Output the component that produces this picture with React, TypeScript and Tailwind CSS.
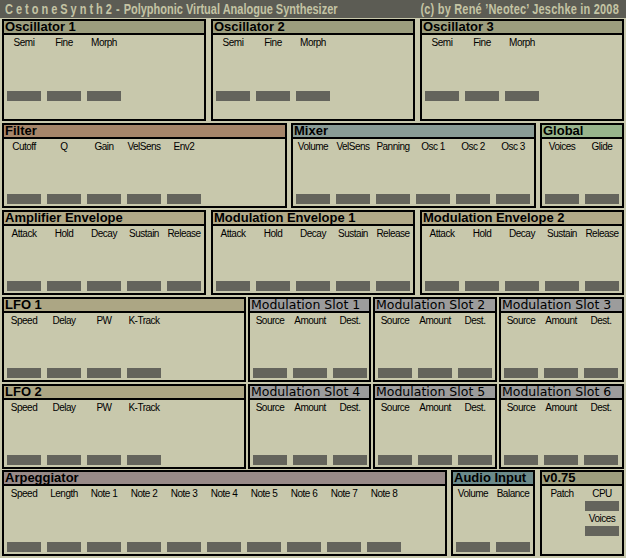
import React from "react";

const LF = "font-['Liberation_Sans',Arial,sans-serif]";

function Controls({ labels, bar = "mt-[41px]" }: { labels: string[]; bar?: string }) {
  return (
    <div className="flex gap-[6px] pl-[3px] pt-[2px]">
      {labels.map((l, i) => (
        <div key={i} className="flex w-[34px] flex-col items-center">
          <div className={`${LF} h-[12px] whitespace-nowrap text-[10px] leading-[12px] tracking-[-0.5px] text-black`}>{l}</div>
          <div className={`${bar} h-[10px] w-[34px] bg-[#64645c]`} />
        </div>
      ))}
    </div>
  );
}

function Panel({
  title,
  hdr,
  w,
  slot = false,
  children,
}: {
  title: string;
  hdr: string;
  w: string;
  slot?: boolean;
  children?: React.ReactNode;
}) {
  return (
    <div className={`${w} flex h-full shrink-0 flex-col overflow-hidden border-2 border-black bg-[#c8c8ac]`}>
      <div
        className={`${hdr} h-[14px] shrink-0 whitespace-nowrap border-b-2 border-black pl-[1px] leading-[12px] text-black ${
          slot ? "font-['DejaVu_Sans',sans-serif] text-[12.5px]" : `${LF} text-[13px] font-bold`
        }`}
      >
        {title}
      </div>
      {children}
    </div>
  );
}

export default function App() {
  const osc = ["Semi", "Fine", "Morph"];
  const env = ["Attack", "Hold", "Decay", "Sustain", "Release"];
  const lfo = ["Speed", "Delay", "PW", "K-Track"];
  const slot = ["Source", "Amount", "Dest."];
  return (
    <div className="flex h-[558px] w-[626px] flex-col overflow-hidden bg-[#c8c8ac]">
      {/* Title bar */}
      <div
        className={`${LF} flex h-[18px] shrink-0 items-center whitespace-nowrap bg-[#5c5c54] text-[11px] font-bold text-[#c4c4a4]`}
      >
        <span className="ml-[5px] inline-block scale-y-[1.4] tracking-[3px]">CetoneSynth2</span>
        <span className="ml-[1px] inline-block scale-y-[1.4]">-</span>
        <span className="ml-[4px] inline-block scale-y-[1.4]">Polyphonic Virtual Analogue Synthesizer</span>
        <span className="ml-auto mr-[7px] inline-block scale-y-[1.4] tracking-[0.2px]">
          (c) by René ’Neotec’ Jeschke in 2008
        </span>
      </div>

      {/* Row 1: oscillators */}
      <div className="mt-[1px] flex h-[102px] shrink-0 pl-[2px]">
        <Panel title="Oscillator 1" hdr="bg-[#9c9e7e]" w="w-[204px]">
          <Controls labels={osc} bar="mt-[42px]" />
        </Panel>
        <div className="w-[5px] shrink-0" />
        <Panel title="Oscillator 2" hdr="bg-[#9c9e7e]" w="w-[204px]">
          <Controls labels={osc} bar="mt-[42px]" />
        </Panel>
        <div className="w-[5px] shrink-0" />
        <Panel title="Oscillator 3" hdr="bg-[#9c9e7e]" w="w-[204px]">
          <Controls labels={osc} bar="mt-[42px]" />
        </Panel>
      </div>

      {/* Row 2 */}
      <div className="mt-[2px] flex h-[85px] shrink-0 gap-[4px] pl-[2px]">
        <Panel title="Filter" hdr="bg-[#a6866a]" w="w-[285px]">
          <Controls labels={["Cutoff", "Q", "Gain", "VelSens", "Env2"]} />
        </Panel>
        <Panel title="Mixer" hdr="bg-[#8a9c96]" w="w-[245px]">
          <Controls labels={["Volume", "VelSens", "Panning", "Osc 1", "Osc 2", "Osc 3"]} />
        </Panel>
        <Panel title="Global" hdr="bg-[#98b48c]" w="w-[84px]">
          <Controls labels={["Voices", "Glide"]} />
        </Panel>
      </div>

      {/* Row 3: envelopes */}
      <div className="mt-[2px] flex h-[85px] shrink-0 gap-[5px] pl-[2px]">
        <Panel title="Amplifier Envelope" hdr="bg-[#b2aa88]" w="w-[204px]">
          <Controls labels={env} />
        </Panel>
        <Panel title="Modulation Envelope 1" hdr="bg-[#b2aa88]" w="w-[204px]">
          <Controls labels={env} />
        </Panel>
        <Panel title="Modulation Envelope 2" hdr="bg-[#b2aa88]" w="w-[204px]">
          <Controls labels={env} />
        </Panel>
      </div>

      {/* Row 4 */}
      <div className="mt-[2px] flex h-[85px] shrink-0 gap-[2px] pl-[2px]">
        <Panel title="LFO 1" hdr="bg-[#aca684]" w="w-[244px]">
          <Controls labels={lfo} />
        </Panel>
        <Panel title="Modulation Slot 1" hdr="bg-[#9c9c9c]" w="w-[123px]" slot>
          <Controls labels={slot} />
        </Panel>
        <Panel title="Modulation Slot 2" hdr="bg-[#9c9c9c]" w="w-[124px]" slot>
          <Controls labels={slot} />
        </Panel>
        <Panel title="Modulation Slot 3" hdr="bg-[#9c9c9c]" w="w-[125px]" slot>
          <Controls labels={slot} />
        </Panel>
      </div>

      {/* Row 5 */}
      <div className="mt-[2px] flex h-[85px] shrink-0 gap-[2px] pl-[2px]">
        <Panel title="LFO 2" hdr="bg-[#aca684]" w="w-[244px]">
          <Controls labels={lfo} />
        </Panel>
        <Panel title="Modulation Slot 4" hdr="bg-[#9c9c9c]" w="w-[123px]" slot>
          <Controls labels={slot} />
        </Panel>
        <Panel title="Modulation Slot 5" hdr="bg-[#9c9c9c]" w="w-[124px]" slot>
          <Controls labels={slot} />
        </Panel>
        <Panel title="Modulation Slot 6" hdr="bg-[#9c9c9c]" w="w-[125px]" slot>
          <Controls labels={slot} />
        </Panel>
      </div>

      {/* Row 6 */}
      <div className="mt-[1px] flex h-[86px] shrink-0 pl-[2px]">
        <Panel title="Arpeggiator" hdr="bg-[#988a88]" w="w-[445px]">
          <Controls
            labels={["Speed", "Length", "Note 1", "Note 2", "Note 3", "Note 4", "Note 5", "Note 6", "Note 7", "Note 8"]}
            bar="mt-[42px]"
          />
        </Panel>
        <div className="w-[4px] shrink-0" />
        <Panel title="Audio Input" hdr="bg-[#6c8a8a]" w="w-[84px]">
          <Controls labels={["Volume", "Balance"]} bar="mt-[42px]" />
        </Panel>
        <div className="w-[5px] shrink-0" />
        <Panel title="v0.75" hdr="bg-[#9e9e7e]" w="w-[84px]">
          <div className="flex gap-[6px] pl-[3px] pt-[2px]">
            <div className="flex w-[34px] flex-col items-center">
              <div className={`${LF} h-[12px] whitespace-nowrap text-[10px] leading-[12px] tracking-[-0.5px] text-black`}>Patch</div>
            </div>
            <div className="flex w-[34px] flex-col items-center">
              <div className={`${LF} h-[12px] whitespace-nowrap text-[10px] leading-[12px] tracking-[-0.5px] text-black`}>CPU</div>
              <div className="mt-[1px] h-[10px] w-[34px] bg-[#64645c]" />
              <div className={`${LF} mt-[2px] h-[12px] whitespace-nowrap text-[10px] leading-[12px] tracking-[-0.5px] text-black`}>Voices</div>
              <div className="mt-[1px] h-[10px] w-[34px] bg-[#64645c]" />
            </div>
          </div>
        </Panel>
      </div>
    </div>
  );
}
